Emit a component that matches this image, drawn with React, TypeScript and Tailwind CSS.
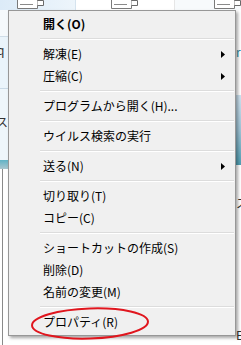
import React from 'react';

type Item =
  | { kind: 'item'; label: string; bold?: boolean; sub?: boolean }
  | { kind: 'sep' };

const items: Item[] = [
  { kind: 'item', label: '開く(O)', bold: true },
  { kind: 'sep' },
  { kind: 'item', label: '解凍(E)', sub: true },
  { kind: 'item', label: '圧縮(C)', sub: true },
  { kind: 'sep' },
  { kind: 'item', label: 'プログラムから開く(H)...' },
  { kind: 'sep' },
  { kind: 'item', label: 'ウイルス検索の実行' },
  { kind: 'sep' },
  { kind: 'item', label: '送る(N)', sub: true },
  { kind: 'sep' },
  { kind: 'item', label: '切り取り(T)' },
  { kind: 'item', label: 'コピー(C)' },
  { kind: 'sep' },
  { kind: 'item', label: 'ショートカットの作成(S)' },
  { kind: 'item', label: '削除(D)' },
  { kind: 'item', label: '名前の変更(M)' },
  { kind: 'sep' },
  { kind: 'item', label: 'プロパティ(R)' },
];

const FileIcon: React.FC = () => (
  <svg width="27" height="10" viewBox="0 0 27 10" className="shrink-0">
    <path d="M0.5 0 V8.5 H20.5 V0" fill="#fff" stroke="#7a7a7a" />
    <line x1="3" y1="4.5" x2="16" y2="4.5" stroke="#8a8a8a" />
    <path d="M20.5 0.5 H26.5 V5.5 H20.5" fill="#fff" stroke="#6a6a6a" />
  </svg>
);

const ContextMenu: React.FC = () => (
  <div className="absolute left-[8px] top-[10px] w-[228px] border border-[#979797] bg-[#f0f0f0] py-[2px] shadow-[2px_2px_3px_rgba(0,0,0,0.35)]">
    {items.map((it, i) =>
      it.kind === 'sep' ? (
        <div key={i} className="h-[8px] flex flex-col justify-center pl-[31px] pr-[1px]">
          <div className="h-px bg-[#dcdcdc]" />
          <div className="h-px bg-white" />
        </div>
      ) : (
        <div key={i} className="h-[22px] flex items-center pl-[34px] pr-[10px]">
          <span className={`flex-1 text-[12px] leading-none text-black ${it.bold ? 'font-bold' : ''}`}>
            {it.label}
          </span>
          {it.sub && (
            <svg width="4" height="7" viewBox="0 0 4 7">
              <path d="M0 0 L4 3.5 L0 7 Z" fill="#000" />
            </svg>
          )}
        </div>
      )
    )}
  </div>
);

export default function App() {
  return (
    <div className="relative w-[241px] h-[345px] overflow-hidden bg-white font-['Noto_Sans_CJK_JP','Noto_Sans',sans-serif]">
      {/* explorer window behind the menu */}
      <div className="flex flex-col h-full">
        <div className="h-[10px] flex">
          <div className="w-[80px] flex bg-gradient-to-r from-[#dcebf8] to-[#edf5fb] pl-[17px]">
            <FileIcon />
          </div>
          <div className="w-px bg-[#d5e3ee]" />
          <div className="w-[104px] flex pl-[35px] bg-white">
            <FileIcon />
          </div>
          <div className="w-px bg-[#e6e6e6]" />
          <div className="flex-1 flex pl-[39px] bg-[#f7fafc]">
            <FileIcon />
          </div>
        </div>
        <div className="flex flex-1">
          <div className="w-[8px] flex flex-col text-[12px] leading-none text-[#333] overflow-hidden">
            <div className="h-[26px] bg-[#f5f9fc]" />
            <div className="h-px bg-[#cfdde8]" />
            <div className="h-[51px] bg-[#eaf4fb] flex items-start pt-[7px] -ml-[3px]">q</div>
            <div className="h-px bg-[#c9d9e6]" />
            <div className="h-[71px] bg-[#eef6fb] flex items-start pt-[27px] -ml-[4px]">ス</div>
            <div className="h-[9px] bg-gradient-to-b from-[#5fb3c6] to-[#a9c6cf]" />
            <div className="flex-1 flex bg-white pl-[2px]">
              <div className="w-px bg-[#8a8a8a]" />
            </div>
          </div>
          <div className="flex-1" />
          <div className="w-[5px] flex flex-col text-[12px] leading-none text-[#333] overflow-hidden">
            <div className="h-[34px] bg-white" />
            <div className="h-[16px] flex items-center text-[#2c8aa0]">r</div>
            <div className="h-[35px] bg-white" />
            <div className="h-[70px] bg-gradient-to-b from-[#cfe3f0] via-[#9fc4d6] to-[#4f9fb3]" />
            <div className="h-[30px] bg-white" />
            <div className="h-[16px] flex items-center">ス</div>
            <div className="flex-1 bg-white" />
            <div className="h-[16px] flex items-center pb-[4px]">E</div>
          </div>
        </div>
      </div>

      <ContextMenu />

      {/* red highlight drawn over the properties item */}
      <svg className="absolute left-0 top-0 pointer-events-none" width="241" height="345">
        <ellipse cx="90" cy="323.5" rx="58" ry="15" fill="none" stroke="#e0161e" strokeWidth="2" transform="rotate(-2 90 323.5)" />
      </svg>
    </div>
  );
}
